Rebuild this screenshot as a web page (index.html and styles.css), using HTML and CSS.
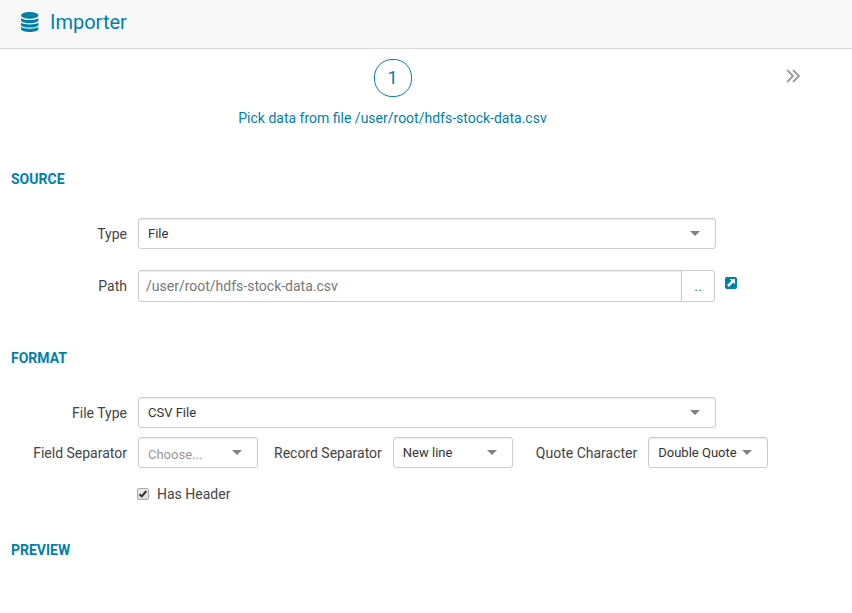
FILE: index.html
```html
<!DOCTYPE html>
<html lang="en">
<head>
<meta charset="utf-8">
<title>Importer</title>
<meta name="viewport" content="width=device-width, initial-scale=1">
<link rel="stylesheet" href="styles.css">
</head>
<body>
<header class="navbar">
  <svg class="navbar-icon" viewBox="0 0 18 20" aria-hidden="true">
    <ellipse cx="8.700" cy="3.400" rx="8.700" ry="3.400"/>
    <path d="M0 6.200Q2.700 8 8.700 8T17.400 6.200V8.300C17.400 12.300 0 12.300 0 8.300z"/>
    <path d="M0 10.800Q2.700 12.500 8.700 12.500T17.400 10.800V12.700C17.400 16.500 0 16.500 0 12.700z"/>
    <path d="M0 15.100Q2.700 16.700 8.700 16.700T17.400 15.100V17C17.400 20.900 0 20.900 0 17z"/>
  </svg>
  <h1 class="navbar-title">Importer</h1>
</header>
<main>
  <nav class="wizard" aria-label="Steps">
    <a class="step" href="#source">
      <span class="step-number">1</span>
      <span class="step-caption">Pick data from file /user/root/hdfs-stock-data.csv</span>
    </a>
    <a class="step-next" href="#next" aria-label="Next step">
      <svg viewBox="0 0 14 14" aria-hidden="true"><path d="M1.200 1L7 7 1.200 13M7 1L12.800 7 7 13"/></svg>
    </a>
  </nav>
  <form>
    <section class="section" id="source">
      <h2 class="section-title">SOURCE</h2>
      <div class="row row-wide">
        <label class="row-label" for="type">Type</label>
        <span class="select"><select id="type"><option>File</option></select></span>
      </div>
      <div class="row row-path">
        <label class="row-label" for="path">Path</label>
        <span class="path-group">
          <input class="path-input" id="path" type="text" value="/user/root/hdfs-stock-data.csv">
          <button class="path-browse" type="button">..</button>
        </span>
        <a class="path-open" href="#open" aria-label="Open file">
          <svg viewBox="0 0 12 12" aria-hidden="true">
            <rect class="open-box" width="12" height="12" rx="2"/>
            <path class="open-arrow" d="M4.800 2H10V7.200L8.300 5.500 3.900 9.900 2.100 8.100 6.500 3.700z"/>
          </svg>
        </a>
      </div>
    </section>
    <section class="section">
      <h2 class="section-title">FORMAT</h2>
      <div class="row row-wide">
        <label class="row-label" for="file-type">File Type</label>
        <span class="select"><select id="file-type"><option>CSV File</option></select></span>
      </div>
      <div class="row row-separators">
        <label class="row-label" for="field-separator">Field Separator</label>
        <span class="select select-small select-empty"><select id="field-separator"><option>Choose...</option></select></span>
        <label class="inline-label" for="record-separator">Record Separator</label>
        <span class="select select-small"><select id="record-separator"><option>New line</option></select></span>
        <label class="inline-label inline-label-last" for="quote-character">Quote Character</label>
        <span class="select select-small"><select id="quote-character"><option>Double Quote</option></select></span>
      </div>
      <label class="check">
        <span class="check-box">
          <input type="checkbox" checked>
          <svg viewBox="0 0 12 12" aria-hidden="true"><path d="M2.500 6.300L4.800 8.300 9.300 3"/></svg>
        </span>
        Has Header
      </label>
    </section>
    <section class="section">
      <h2 class="section-title">PREVIEW</h2>
    </section>
  </form>
</main>
</body>
</html>
```
FILE: styles.css
```css
* {
  box-sizing: border-box;
}

body {
  margin: 0;
  background: #fff;
  color: #444;
  font: 14px/20px Roboto, sans-serif;
}

a {
  color: #007fa8;
  text-decoration: none;
}

svg {
  display: block;
}

.navbar {
  display: flex;
  align-items: center;
  gap: 11px;
  height: 49px;
  padding: 0 21px 5px;
  background: #f8f8f8;
  border-bottom: 1px solid #d8d8d8;
}

.navbar-icon {
  width: 18px;
  height: 20px;
  fill: #007fa8;
}

.navbar-title {
  margin: 0;
  color: #007fa8;
  font-size: 20px;
  font-weight: 400;
  line-height: 24px;
}

.wizard {
  display: flex;
  padding: 10px 0 5px;
}

.step {
  display: flex;
  flex: 1;
  flex-direction: column;
  align-items: center;
  gap: 11px;
}

.step-number {
  width: 38px;
  height: 38px;
  border: 1px solid #007fa8;
  border-radius: 18px;
  font-size: 18px;
  line-height: 36px;
  text-align: center;
}

.step-next {
  width: 67px;
  padding: 10px 0 0 1px;
}

.step-next svg {
  width: 14px;
  height: 14px;
  fill: none;
  stroke: #a0a0a0;
  stroke-width: 2;
}

.section {
  margin-top: 36px;
}

.section-title {
  margin: 0 0 29px 11px;
  color: #007fa8;
  font-size: 14px;
  font-weight: 700;
  line-height: 20px;
}

.row {
  display: flex;
  align-items: center;
}

.row-wide {
  padding-right: 136px;
}

.row-label {
  flex: none;
  width: 127px;
  margin-right: 11px;
  text-align: right;
}

.row-path {
  margin-top: 21px;
  margin-bottom: 46px;
}

.row-separators {
  margin-top: 9px;
}

.inline-label {
  margin: 0 11px 0 16px;
}

.inline-label-last {
  margin-left: 23px;
}

.select {
  position: relative;
  flex: 1;
}

.select::after {
  position: absolute;
  top: 13px;
  right: 16px;
  border: 5px solid transparent;
  border-top-color: #808080;
  border-bottom: 0;
  content: "";
  pointer-events: none;
}

.select-small {
  flex: 0 0 120px;
}

.select select {
  display: block;
  width: 100%;
  height: 31px;
  padding: 0 20px 0 9px;
  appearance: none;
  background: #fff;
  border: 1px solid #ccc;
  border-radius: 3px;
  box-shadow: inset 0 1px 1px rgba(0, 0, 0, 0.08);
  color: #333;
  font: 13px/20px Roboto, sans-serif;
}

.select-empty select {
  padding-top: 4px;
  color: #999;
}

.path-group {
  display: flex;
  flex: 1;
}

.path-input,
.path-browse {
  height: 32px;
  border: 1px solid #ccc;
  font: 14px/20px Roboto, sans-serif;
}

.path-input {
  flex: 1;
  min-width: 0;
  padding: 0 7px;
  border-radius: 3px 0 0 3px;
  box-shadow: inset 0 1px 1px rgba(0, 0, 0, 0.08);
  color: #777;
}

.path-browse {
  width: 34px;
  margin-left: -1px;
  padding: 0;
  background: #fff;
  border-radius: 0 3px 3px 0;
  color: #007fa8;
}

.path-open {
  width: 137px;
  padding: 0 0 6px 10px;
}

.path-open svg {
  width: 12px;
  height: 12px;
}

.open-box {
  fill: #007fa8;
}

.open-arrow {
  fill: #fff;
}

.check {
  display: flex;
  align-items: center;
  width: max-content;
  gap: 8px;
  margin: 16px 0 0 137px;
}

.check-box {
  position: relative;
}

.check-box input {
  display: block;
  width: 12px;
  height: 12px;
  margin: 0;
  appearance: none;
  background: linear-gradient(#eee, #ddd);
  border: 1px solid #aaa;
  border-radius: 2px;
}

.check-box svg {
  position: absolute;
  inset: 0;
  display: none;
  width: 12px;
  height: 12px;
  fill: none;
  stroke: #333;
  stroke-width: 2;
  pointer-events: none;
}

.check-box input:checked + svg {
  display: block;
}
```
